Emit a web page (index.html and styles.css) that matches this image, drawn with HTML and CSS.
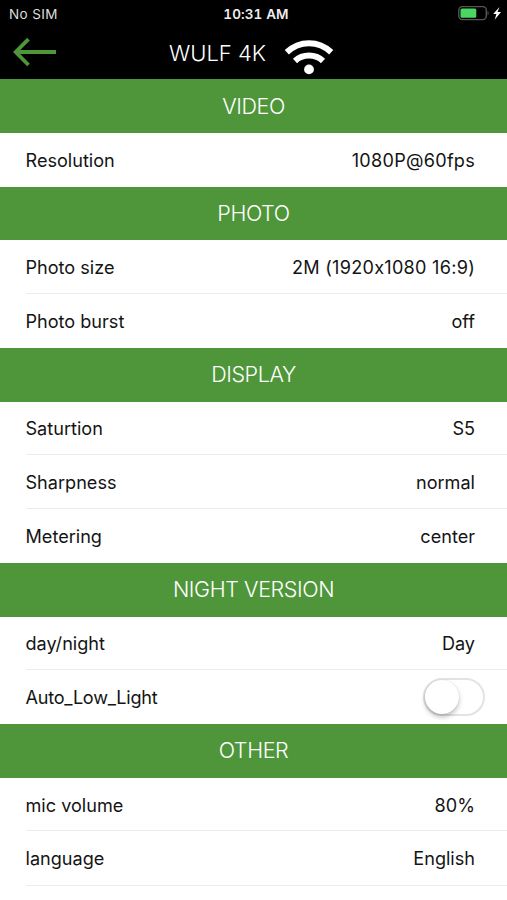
FILE: index.html
```
<!DOCTYPE html>
<html lang="en">
<head>
<meta charset="utf-8">
<title>WULF 4K</title>
<link rel="stylesheet" href="styles.css">
</head>
<body>
<header class="top">
  <div class="status">
    <span class="carrier">No SIM</span>
    <span class="clock">10:31 AM</span>
    <svg class="battery" width="46" height="16" viewBox="0 0 46 16">
      <rect x="0.8" y="0.6" width="27.5" height="13" rx="3.5" fill="none" stroke="#555" stroke-width="1.4"/>
      <rect x="2.5" y="2.5" width="15.8" height="9.3" rx="1.5" fill="#4bd562"/>
      <path d="M29.6 4.7q2 2.4 0 4.8z" fill="#666"/>
      <path d="M41.5 1 35.200 8h3.200l-1.700 5.800 6.300-7.700h-3.500z" fill="#fff"/>
    </svg>
  </div>
  <nav class="bar">
    <svg class="back" width="44" height="30" viewBox="0 0 44 30" fill="none" stroke="#4f963a" stroke-width="3.8">
      <path d="M15.5 1.1 2.7 14 15.5 27M3 14H43"/>
    </svg>
    <h1 class="title">WULF 4K</h1>
    <svg class="wifi" width="50" height="36" viewBox="0 0 50 36" fill="none" stroke="#fff" stroke-width="6">
      <path d="M2.8 13.2C15.5 1.2 34.5 1.2 47.2 13.2M11 22C18.5 14.8 31.5 14.8 39 22"/>
      <circle cx="25" cy="30.4" r="4.9" fill="#fff" stroke="none"/>
    </svg>
  </nav>
</header>
<main class="list">
  <h2 class="section">VIDEO</h2>
  <div class="row"><span class="label">Resolution</span><span class="value numeric">1080P@60fps</span></div>
  <h2 class="section">PHOTO</h2>
  <div class="row"><span class="label">Photo size</span><span class="value numeric">2M (1920x1080 16:9)</span></div>
  <div class="row"><span class="label">Photo burst</span><span class="value">off</span></div>
  <h2 class="section">DISPLAY</h2>
  <div class="row"><span class="label">Saturtion</span><span class="value">S5</span></div>
  <div class="row"><span class="label">Sharpness</span><span class="value">normal</span></div>
  <div class="row"><span class="label">Metering</span><span class="value">center</span></div>
  <h2 class="section">NIGHT VERSION</h2>
  <div class="row"><span class="label">day/night</span><span class="value">Day</span></div>
  <div class="row"><span class="label tight">Auto_Low_Light</span><span class="switch"><span class="knob"></span></span></div>
  <h2 class="section">OTHER</h2>
  <div class="row"><span class="label">mic volume</span><span class="value">80%</span></div>
  <div class="row"><span class="label">language</span><span class="value">English</span></div>
</main>
</body>
</html>
```
FILE: styles.css
```
* { box-sizing: border-box; }
body {
  margin: 0;
  height: 900px;
  overflow: hidden;
  background: #fff;
  color: #141414;
  font-family: Inter, "Liberation Sans", sans-serif;
}
.top { height: 79.2px; background: #000; color: #fff; }
.status {
  display: grid;
  grid-template-columns: 1fr auto 1fr;
  align-items: center;
  height: 27px;
  padding: 0 3px 0 9px;
  font-size: 13.5px;
}
.carrier { color: #ddd; letter-spacing: .4px; }
.clock {
  margin-right: 1px;
  color: #eee;
  font-size: 13.5px;
  font-weight: 600;
  font-feature-settings: "tnum";
  letter-spacing: .1px;
}
.battery { justify-self: end; }
.bar { display: flex; align-items: center; height: 51px; padding-left: 13px; }
.back { flex: none; }
.title {
  margin: 0 0 0 112px;
  width: 98px;
  font-size: 22px;
  font-weight: 300;
  white-space: nowrap;
}
.wifi { flex: none; margin: 8px 0 0 17px; }
.section {
  display: flex;
  align-items: center;
  justify-content: center;
  height: 53.74px;
  margin: 0;
  padding-bottom: 1px;
  background: #4f963a;
  color: #fff;
  font-size: 21.5px;
  font-weight: 300;
  letter-spacing: -.4px;
}
.row {
  display: flex;
  align-items: center;
  justify-content: space-between;
  height: 53.74px;
  padding: 0 32px 0 0;
  margin-left: 25.5px;
  font-size: 18.1px;
  font-feature-settings: "calt" 0;
}
.row + .row { box-shadow: 0 -1px #ececec; }
.row:last-child { box-shadow: 0 -1px #ececec, 0 1px #ececec; }
.numeric { letter-spacing: .26px; }
.tight { letter-spacing: -.25px; }
.switch {
  width: 62px;
  height: 38px;
  margin-right: -10px;
  border: 2px solid #e3e3e3;
  border-radius: 19px;
}
.knob {
  display: block;
  width: 34px;
  height: 34px;
  border-radius: 50%;
  background: #fff;
  box-shadow: 0 3px 5px rgba(0,0,0,.25), 0 0 1px rgba(0,0,0,.15);
}
```
